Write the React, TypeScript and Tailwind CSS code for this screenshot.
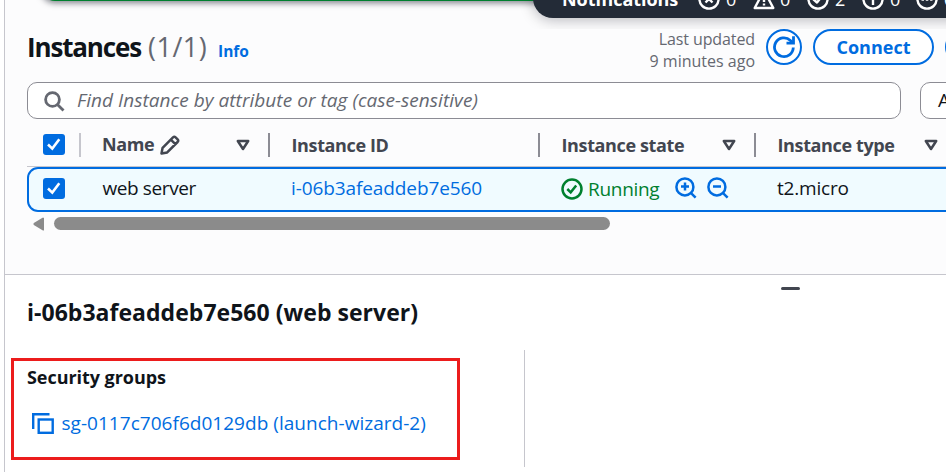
import type { ReactNode } from "react";

const BLUE = "#006ce0";

function Checkbox() {
  return (
    <span className="flex h-[21px] w-[22px] shrink-0 items-center justify-center rounded-[3px] bg-[#006ce0]">
      <svg width="22" height="21" viewBox="0 0 22 21" fill="none" stroke="#fff" strokeWidth="2.6">
        <path d="M5 10.5 L9.3 14.6 L16.3 5.3" />
      </svg>
    </span>
  );
}

function SortIcon() {
  return (
    <svg className="mt-[1px] shrink-0" width="14" height="12" viewBox="0 0 14 12" fill="none" stroke="#424650" strokeWidth="2.5" strokeLinejoin="round">
      <path d="M1.8 2 H12.2 L7 10 Z" />
    </svg>
  );
}

function Divider({ light = false }: { light?: boolean }) {
  return <span className={light ? "h-6 w-[2px] shrink-0 bg-[#c6c6cd]" : "h-6 w-[2px] shrink-0 bg-[#8c8c94]"} />;
}

function HeaderCell({ className, children }: { className: string; children: ReactNode }) {
  return <div className={`flex shrink-0 items-center justify-between whitespace-nowrap text-[18px] font-bold leading-6 tracking-[-0.37px] text-[#424650] ${className}`}>{children}</div>;
}

function Magnifier({ plus = false }: { plus?: boolean }) {
  return (
    <svg width="22" height="22" viewBox="0 0 22 22" fill="none" stroke={BLUE} strokeWidth="2.5">
      <circle cx="9.9" cy="9.9" r="8.5" />
      <path d="M15.8 15.8 L20.6 20.6" />
      <path d="M6 9.5 H14" />
      {plus && <path d="M10 5.5 V13.5" />}
    </svg>
  );
}

function StatusIcon({ children, triangle = false }: { children: ReactNode; triangle?: boolean }) {
  return (
    <svg className="mt-[1px]" width="22" height="22" viewBox="0 0 22 22" fill="none" stroke="#fff" strokeWidth="2.4" strokeLinejoin="round">
      {triangle ? <path d="M11 2.5 L20.3 20 H1.7 Z" /> : <circle cx="11" cy="11" r="9.6" />}
      {children}
    </svg>
  );
}

function Notifications() {
  return (
    <div className="absolute left-[533px] top-[-30px] flex h-[48px] w-[440px] rounded-bl-[20px] bg-[#232b37] pl-[29px] pt-[16px] font-bold text-white shadow-[0_2px_14px_rgba(0,7,22,0.28)]">
      <span className="w-[136px] text-[18px] leading-[26px] tracking-[-0.05px]">Notifications</span>
      <div className="flex pt-[1px] text-[18px] font-normal leading-[25px]">
        <span className="flex w-[55px] gap-[6px]"><StatusIcon><path d="M7.5 7.5 L14.5 14.5 M14.5 7.5 L7.5 14.5" /></StatusIcon>0</span>
        <span className="flex w-[54px] gap-[5px]"><StatusIcon triangle><path d="M11 9 V14 M11 15.4 V17.6" /></StatusIcon>0</span>
        <span className="flex w-[55px] gap-[6px]"><StatusIcon><path d="M6 11 L10 14.5 L15.5 7.5" /></StatusIcon>2</span>
        <span className="flex w-[54px] gap-[6px]"><StatusIcon><path d="M11 9.5 V17 M11 5 V7.5" /></StatusIcon>0</span>
        <span className="flex gap-[6px]"><StatusIcon><path d="M5.5 11.5 H16.5" strokeDasharray="2.5 1.8" /></StatusIcon>0</span>
      </div>
    </div>
  );
}

export default function App() {
  return (
    <div className="relative flex h-[472px] w-[946px] overflow-hidden bg-[#fcfcfd] font-['Open_Sans','Noto_Sans',sans-serif] text-[#0f141a]">
      <div className="w-1 shrink-0 bg-white" />
      <div className="w-px shrink-0 bg-[#c6c6cd]" />
      <main className="flex min-w-0 flex-1 flex-col">
        <section className="flex h-[274px] shrink-0 flex-col overflow-hidden pl-[22px] pt-[29px]">
          <div className="flex h-[53px] shrink-0">
            <div className="flex items-baseline pt-[1px] leading-[34px]">
              <h1 className="w-[121px] whitespace-nowrap text-[26px] font-bold tracking-[-1.15px]">Instances</h1>
              <span className="w-[70px] whitespace-nowrap text-[27px] tracking-[0.5px] text-[#656871]">(1/1)</span>
              <a className="text-[15.5px] font-bold text-[#006ce0]">Info</a>
            </div>
            <div className="-mt-[1px] ml-auto mr-[11px] whitespace-nowrap text-right text-[16px] leading-[22px] text-[#656871]">
              <div className="tracking-[-0.1px]">Last updated</div>
              <div>9 minutes ago</div>
            </div>
            <button className="mr-[11px] flex size-9 shrink-0 items-center justify-center rounded-full border-2 border-[#006ce0] bg-white">
              <svg width="24" height="24" viewBox="0 0 24 24" fill="none" stroke={BLUE} strokeWidth="2.8">
                <path d="M21.3 12.5 A9.4 9.4 0 1 1 18.4 5.4 L21 8" />
                <path d="M21.5 1.2 V8.2 H14.5" />
              </svg>
            </button>
            <button className="flex h-9 w-[121px] shrink-0 items-center justify-center rounded-full border-2 border-[#006ce0] bg-white text-[18px] font-bold text-[#006ce0]">Connect</button>
            <div className="ml-[11px] h-9 w-px shrink-0 overflow-hidden">
              <div className="h-9 w-10 rounded-full border-2 border-[#006ce0]" />
            </div>
          </div>

          <div className="flex h-[37px] shrink-0 gap-[19px]">
            <div className="flex w-[874px] shrink-0 items-center rounded-[10px] border border-[#8c8c94] bg-white pl-[16px] text-[19px] italic text-[#656871]">
              <svg className="mr-[12px] mt-[1px]" width="21" height="21" viewBox="0 0 21 21" fill="none" stroke="#656871" strokeWidth="2.8">
                <circle cx="8.5" cy="8.5" r="6.9" />
                <path d="M13.4 13.4 L19.5 19.5" />
              </svg>
              <span className="whitespace-nowrap tracking-[0.05px]">Find Instance by attribute or tag (case-sensitive)</span>
            </div>
            <div className="flex w-[120px] shrink-0 items-center rounded-[10px] border border-[#8c8c94] bg-white pl-[17px] text-[19px]">Any state</div>
          </div>

          <div className="flex h-[48px] shrink-0 items-center border-b border-[#c6c6cd] pb-[1px] pl-4 pt-[5px]">
            <Checkbox />
            <span className="w-[14px] shrink-0" />
            <Divider light />
            <HeaderCell className="w-[187px] pl-[21px] pr-[18px]">
              <span className="flex items-center gap-[6px]">
                <span className="-mt-[1px]">Name</span>
                <svg width="20" height="20" viewBox="0 0 20 20" fill="none" stroke="#424650" strokeWidth="2.5" strokeLinejoin="round">
                  <path d="M1.5 18.5 L2.6 12.8 L13 2.4 Q14.3 1.2 15.6 2.4 L17.6 4.4 Q18.8 5.7 17.6 7 L7.2 17.4 Z M10.8 4.6 L15.4 9.2" />
                </svg>
              </span>
              <SortIcon />
            </HeaderCell>
            <Divider />
            <HeaderCell className="w-[268px] pl-[21.5px]">Instance ID</HeaderCell>
            <Divider />
            <HeaderCell className="w-[214px] pl-[21.5px] pr-[18px]">Instance state<SortIcon /></HeaderCell>
            <Divider />
            <HeaderCell className="w-[200px] pl-[21.5px] pr-[18px]">Instance type<SortIcon /></HeaderCell>
          </div>

          <div className="flex h-[45px] w-[960px] shrink-0 items-center whitespace-nowrap rounded-l-[11px] border-2 border-[#006ce0] bg-[#f0fbff] pb-[2px] pl-[14px] text-[19px] leading-6">
            <Checkbox />
            <span className="w-[189px] shrink-0 pb-[2px] pl-[37.5px] tracking-[-0.4px]">web server</span>
            <a className="ml-[37px] w-[270px] shrink-0 pb-[2px] tracking-[-0.1px] text-[#006ce0]">i-06b3afeaddeb7e560</a>
            <span className="flex w-[114px] shrink-0 items-center gap-[5px] pt-[1px] tracking-[-0.3px] text-[#00802f]">
              <svg className="shrink-0" width="22" height="22" viewBox="0 0 22 22" fill="none" stroke="#00802f" strokeWidth="2.5">
                <circle cx="11" cy="11" r="9.5" />
                <path d="M6.3 11 L9.7 14.3 L15.2 7.5" />
              </svg>
              <span className="-mt-[1px]">Running</span>
            </span>
            <span className="flex w-[102px] shrink-0 gap-[10px] pb-[2px]">
              <Magnifier plus />
              <Magnifier />
            </span>
            <span className="pb-[2px] tracking-[-0.2px]">t2.micro</span>
          </div>

          <div className="mt-[5px] flex h-[13px] shrink-0 items-center pl-[6px]">
            <svg width="11" height="14" viewBox="0 0 11 14" fill="#8b8b8b">
              <path d="M10.5 1 Q11 0 9.5 0.8 L0.8 6 Q0 7 0.8 8 L9.5 13.3 Q11 14 11 13 V1 Z" />
            </svg>
            <span className="ml-[10px] h-[13px] w-[556px] rounded-full bg-[#8b8b8b]" />
          </div>
        </section>

        <section className="flex flex-1 flex-col border-t border-[#c6c6cd] bg-white">
          <div className="flex h-[18px] shrink-0 justify-end pr-[146px] pt-[12px]">
            <span className="h-[3px] w-[19px] shrink-0 rounded-full bg-[#424650]" />
          </div>
          <h2 className="h-[57px] shrink-0 whitespace-nowrap pl-[22px] text-[23px] font-bold leading-[38px] tracking-[0.03px]">i-06b3afeaddeb7e560 (web server)</h2>
          <div className="flex h-[117px] shrink-0">
            <div className="flex w-[520px] shrink-0 border-r border-[#c6c6cd] pl-[6px] pt-[8px]">
              <div className="h-[102px] w-[449px] border-[3px] border-[#ec1c1c] pl-[13px] pt-[4px] text-[18px] leading-6">
                <div className="font-bold tracking-[-0.05px]">Security groups</div>
                <div className="mt-[22px] flex items-center whitespace-nowrap pl-[5px] text-[19px] text-[#006ce0]">
                  <svg className="mr-[7.5px]" width="22" height="21" viewBox="0 0 22 21" fill="none" stroke={BLUE} strokeWidth="2.4">
                    <path d="M1.2 16 V1.2 H17.5" />
                    <rect x="6.7" y="6.5" width="14" height="13.3" />
                  </svg>
                  <span className="tracking-[0.03px]">sg-0117c706f6d0129db (launch-wizard-2)</span>
                </div>
              </div>
            </div>
          </div>
        </section>
      </main>

      <div className="absolute left-0 top-0 h-[29px] w-[946px] overflow-hidden">
        <div className="absolute left-[41px] top-[-40px] h-[41px] w-[900px] rounded-bl-[14px] bg-[#00802f] shadow-[0_2px_6px_rgba(0,7,22,0.5)]" />
        <Notifications />
      </div>
    </div>
  );
}
